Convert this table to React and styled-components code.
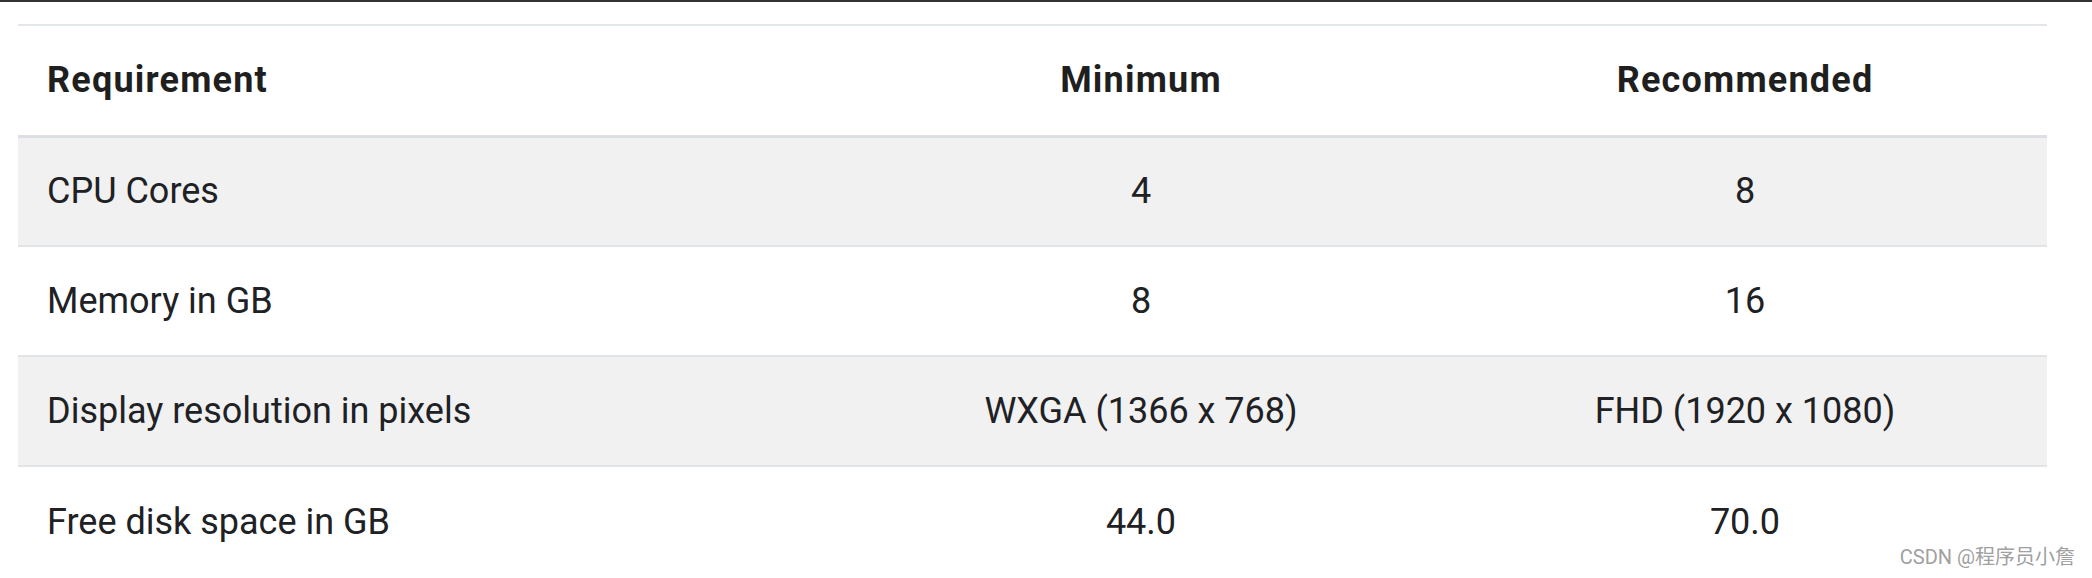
import styled, { createGlobalStyle } from 'styled-components'

const GlobalStyle = createGlobalStyle`
body {
  margin: 0;
  background: #ffffff;
  font-family: Roboto, "Liberation Sans", sans-serif;
}
`

const Page = styled.div`
position: relative;
width: 2092px;
height: 578px;
overflow: hidden;
background: #ffffff;
`

const TopBar = styled.div`
height: 2px;
background: #333333;
`

const Table = styled.table`
margin: 22px 0 0 18px;
width: 2029px;
border-collapse: collapse;
table-layout: fixed;
border-top: 2px solid #e3e6e9;
color: #202124;
font-size: 36px;
`

const HeadRow = styled.tr`
height: 111px;
border-bottom: 3px solid #dcdfe3;
`

const Row = styled.tr`
height: 110px;
background: ${p => (p.$shaded ? '#f1f1f1' : '#ffffff')};
border-bottom: 2px solid #e2e5e8;

&:last-child {
  border-bottom: none;
}
`

const HeadCell = styled.th`
padding: 0 29px;
font-weight: 700;
letter-spacing: 1.2px;
text-align: ${p => p.$align || 'center'};
vertical-align: middle;
color: #1f1f1f;
`

const Cell = styled.td`
padding: 0 29px;
font-weight: 400;
text-align: ${p => p.$align || 'center'};
vertical-align: middle;
`

const Watermark = styled.div`
position: absolute;
right: 17px;
bottom: 8px;
font-size: 20px;
color: #a0a0a0;
font-family: Roboto, "Noto Sans CJK SC", sans-serif;
`

const rows = [
  ['CPU Cores', '4', '8'],
  ['Memory in GB', '8', '16'],
  ['Display resolution in pixels', 'WXGA (1366 x 768)', 'FHD (1920 x 1080)'],
  ['Free disk space in GB', '44.0', '70.0'],
]

export default function App() {
  return (
    <Page>
      <GlobalStyle />
      <TopBar />
      <Table>
        <colgroup>
          <col style={{ width: 821 }} />
          <col style={{ width: 604 }} />
          <col style={{ width: 604 }} />
        </colgroup>
        <thead>
          <HeadRow>
            <HeadCell $align="left">Requirement</HeadCell>
            <HeadCell>Minimum</HeadCell>
            <HeadCell>Recommended</HeadCell>
          </HeadRow>
        </thead>
        <tbody>
          {rows.map((r, i) => (
            <Row key={r[0]} $shaded={i % 2 === 0}>
              <Cell $align="left">{r[0]}</Cell>
              <Cell>{r[1]}</Cell>
              <Cell>{r[2]}</Cell>
            </Row>
          ))}
        </tbody>
      </Table>
      <Watermark>CSDN @程序员小詹</Watermark>
    </Page>
  )
}
